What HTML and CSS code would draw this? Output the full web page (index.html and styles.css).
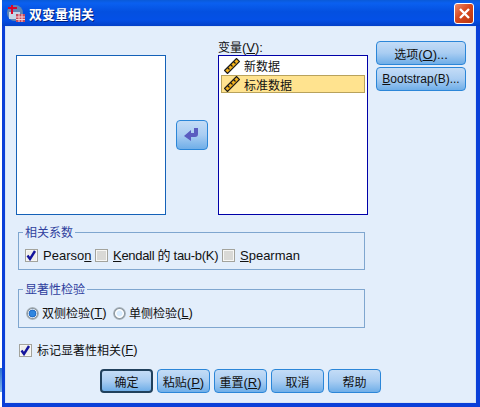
FILE: index.html
```html
<!DOCTYPE html>
<html lang="zh-CN">
<head>
    <meta charset="utf-8">
    <title>双变量相关</title>
    <link rel="stylesheet" href="styles.css">
</head>
<body>
    <div class="dialog">
        <div class="titlebar">
            <svg class="app-icon" width="18" height="18" viewBox="0 0 18 18">
                <circle cx="8" cy="9" r="8" fill="#5f86b5"/>
                <path d="M2 8h11v7H2z" fill="#c6d6e8"/>
                <path d="M5 1v9M1 4h9" stroke="#d8062c" stroke-width="2" fill="none"/>
                <path d="M9 10h9v8H9z" fill="#c64a5c"/>
                <path d="M9 13h9M9 15.500h9M12 10v8M15 10v8" stroke="#f3d4d8" stroke-width="1" fill="none"/>
            </svg>
            <span class="title">双变量相关</span>
            <div class="close">
                <svg width="13" height="13" viewBox="0 0 13 13"><path d="M2 2l9 9M11 2l-9 9" stroke="#fff" stroke-width="2.400" fill="none"/></svg>
            </div>
        </div>
        <div class="content">
            <div class="top">
                <div class="listbox source"></div>
                <div class="mover">
                    <button class="btn arrow">
                        <svg width="16" height="14" viewBox="0 0 16 14"><path d="M0 8l7-6v3h3V0h4v6c0 2-1 3-3 3H7v4z" fill="#5a5cc0"/></svg>
                    </button>
                </div>
                <div class="target">
                    <div class="label">变量<span class="key">(<u>V</u>):</span></div>
                    <div class="listbox vars">
                        <div class="var">
                            <svg class="ruler" width="16" height="16" viewBox="0 0 16 16"><path d="M.500 12.500L12.500.500l3 3-12 12z" fill="#f5b31c" stroke="#1c1c1c" stroke-width="1.200"/><path d="M3.500 9.500l2 2M6.500 6.500l2 2M9.500 3.500l2 2" stroke="#1c1c1c" stroke-width="1.200"/></svg>
                            新数据
                        </div>
                        <div class="var selected">
                            <svg class="ruler" width="16" height="16" viewBox="0 0 16 16"><path d="M.500 12.500L12.500.500l3 3-12 12z" fill="#f5b31c" stroke="#1c1c1c" stroke-width="1.200"/><path d="M3.500 9.500l2 2M6.500 6.500l2 2M9.500 3.500l2 2" stroke="#1c1c1c" stroke-width="1.200"/></svg>
                            标准数据
                        </div>
                    </div>
                </div>
                <div class="side">
                    <button class="btn side-btn">选项<span class="key">(<u>O</u>)...</span></button>
                    <button class="btn side-btn"><u>B</u>ootstrap(B)...</button>
                </div>
            </div>

            <fieldset class="group first">
                <legend>相关系数</legend>
                <label class="opt pearson"><span class="check on"><svg width="11" height="11" viewBox="0 0 11 11"><path d="M1.500 5.500l2.500 3.500 5-8" stroke="#14149c" stroke-width="2.400" fill="none"/></svg></span>Pearso<u>n</u></label>
                <label class="opt kendall"><span class="check"></span><u>K</u>endall 的 tau-b(K)</label>
                <label class="opt"><span class="check"></span><u>S</u>pearman</label>
            </fieldset>

            <fieldset class="group second">
                <legend>显著性检验</legend>
                <label class="opt zh two-sided"><span class="radio on"></span>双侧检验<span class="key">(<u>T</u>)</span></label>
                <label class="opt zh"><span class="radio"></span>单侧检验<span class="key">(<u>L</u>)</span></label>
            </fieldset>

            <label class="opt zh flag"><span class="check on"><svg width="11" height="11" viewBox="0 0 11 11"><path d="M1.500 5.500l2.500 3.500 5-8" stroke="#14149c" stroke-width="2.400" fill="none"/></svg></span>标记显著性相关<span class="key">(<u>F</u>)</span></label>

            <div class="actions">
                <button class="btn default">确定</button>
                <button class="btn">粘贴<span class="key">(<u>P</u>)</span></button>
                <button class="btn">重置<span class="key">(<u>R</u>)</span></button>
                <button class="btn">取消</button>
                <button class="btn">帮助</button>
            </div>
        </div>
    </div>
</body>
</html>
```

FILE: styles.css
```css
* {
    margin: 0;
    padding: 0;
    box-sizing: border-box;
}
body {
    width: 480px;
    height: 407px;
    overflow: hidden;
    padding-left: 2px;
    background: linear-gradient(#fff 368px, #2a6fd0 368px, #7fb2e8 392px, #fff 392px);
    font-family: "Liberation Sans", "Noto Sans CJK SC", sans-serif;
    font-size: 13px;
    color: #111;
}
.dialog {
    width: 478px;
    height: 407px;
    display: flex;
    flex-direction: column;
    background: #0a4fe0;
    border: solid #0a3fd8;
    border-width: 0 4px 4px 3px;
}
.titlebar {
    height: 26px;
    margin: 0 -4px 0 -3px;
    padding: 0 6px 0 5px;
    display: flex;
    align-items: center;
    background: linear-gradient(#0a5ad8, #0a60f0 12%, #0450e0 45%, #0450e6 75%, #0340c8);
}
.app-icon {
    margin-right: 4px;
}
.title {
    flex: 1;
    color: #fff;
    font: bold 13px "Noto Sans CJK SC", sans-serif;
    text-shadow: 1px 1px 0 #02207a;
}
.close {
    width: 20px;
    height: 21px;
    display: flex;
    align-items: center;
    justify-content: center;
    border: 1px solid #fff;
    border-radius: 3px;
    background: linear-gradient(135deg, #ec8a6a, #d8491f 45%, #b8350e);
}
.content {
    flex: 1;
    background: #e3eefb;
    border: 1px solid #d6e4f5;
    padding: 0 0 0 10px;
}
.top {
    display: flex;
    height: 188px;
}
.listbox {
    width: 150px;
    height: 160px;
    background: #fff;
}
.source {
    margin-top: 28px;
    border: 1px solid #1461b8;
}
.mover {
    width: 52px;
    padding: 93px 0 0 10px;
}
.label {
    height: 28px;
    padding-top: 12px;
    font-family: "Noto Sans CJK SC", sans-serif;
    font-size: 12px;
    line-height: 15px;
}
.key {
    font-family: "Liberation Sans", sans-serif;
    font-size: 13px;
}
.vars {
    border: 1px solid #0000a8;
    padding: 0 2px;
}
.var {
    height: 19px;
    display: flex;
    align-items: center;
    gap: 4px;
    padding-left: 3px;
    font-family: "Noto Sans CJK SC", sans-serif;
    font-size: 12px;
}
.var.selected {
    height: 18px;
    background: #ffe38f;
    border: 1px solid #b8a25c;
    padding-left: 2px;
}
.side {
    margin-left: 8px;
    padding-top: 14px;
    display: flex;
    flex-direction: column;
    gap: 2px;
}
.btn {
    height: 24px;
    border: 1px solid #2b86d8;
    border-radius: 4px;
    background: linear-gradient(#c4dcf6, #a9cdf2 50%, #6faee8);
    font: 12px "Liberation Sans", "Noto Sans CJK SC", sans-serif;
    color: #111;
}
.side-btn {
    width: 90px;
}
.arrow {
    width: 32px;
    height: 30px;
    display: flex;
    align-items: center;
    justify-content: center;
}
.group {
    width: 347px;
    height: 45px;
    margin-left: 2px;
    border: 1px solid #7fa6cf;
    display: flex;
    align-items: center;
    padding: 3px 0 0 6px;
}
.group legend {
    margin-left: -2px;
    padding: 0 2px;
    color: #2f3f9e;
    font-family: "Noto Sans CJK SC", sans-serif;
    font-size: 12px;
    line-height: 14px;
}
.first {
    margin-top: 10px;
}
.second {
    height: 46px;
    margin-top: 12px;
}
.opt {
    display: flex;
    align-items: center;
    line-height: 16px;
    white-space: pre;
}
.zh {
    font-family: "Noto Sans CJK SC", sans-serif;
    font-size: 12px;
}
.pearson {
    width: 70px;
}
.kendall {
    width: 127px;
    letter-spacing: -0.3px;
}
.two-sided {
    width: 87px;
}
.check {
    width: 13px;
    height: 13px;
    margin-right: 5px;
    padding: 0;
    background: #d9d9d6;
    border: 1px solid #a3a39c;
    box-shadow: inset 0 0 0 1px #f7f7f5;
    display: flex;
}
.check.on {
    background: #eeeeea;
}
.radio {
    width: 13px;
    height: 13px;
    margin: 0 3px 0 1px;
    border-radius: 50%;
    background: radial-gradient(circle, #d8ecff 0 2.500px, #fff 3.500px, #fff 4px, #8f9aa3 5px, #b4bec6 6.500px);
}
.radio.on {
    background: radial-gradient(circle, #2f86e0 0 2.500px, #1862c0 3.500px, #e6eef6 4.200px, #8f9aa3 5px, #b4bec6 6.500px);
}
.flag {
    margin: 14px 0 0 3px;
}
.actions {
    display: flex;
    gap: 4px;
    margin: 11px 0 0 84px;
}
.actions .btn {
    width: 53px;
}
.actions .default {
    border: 2px solid #20405c;
}
```
